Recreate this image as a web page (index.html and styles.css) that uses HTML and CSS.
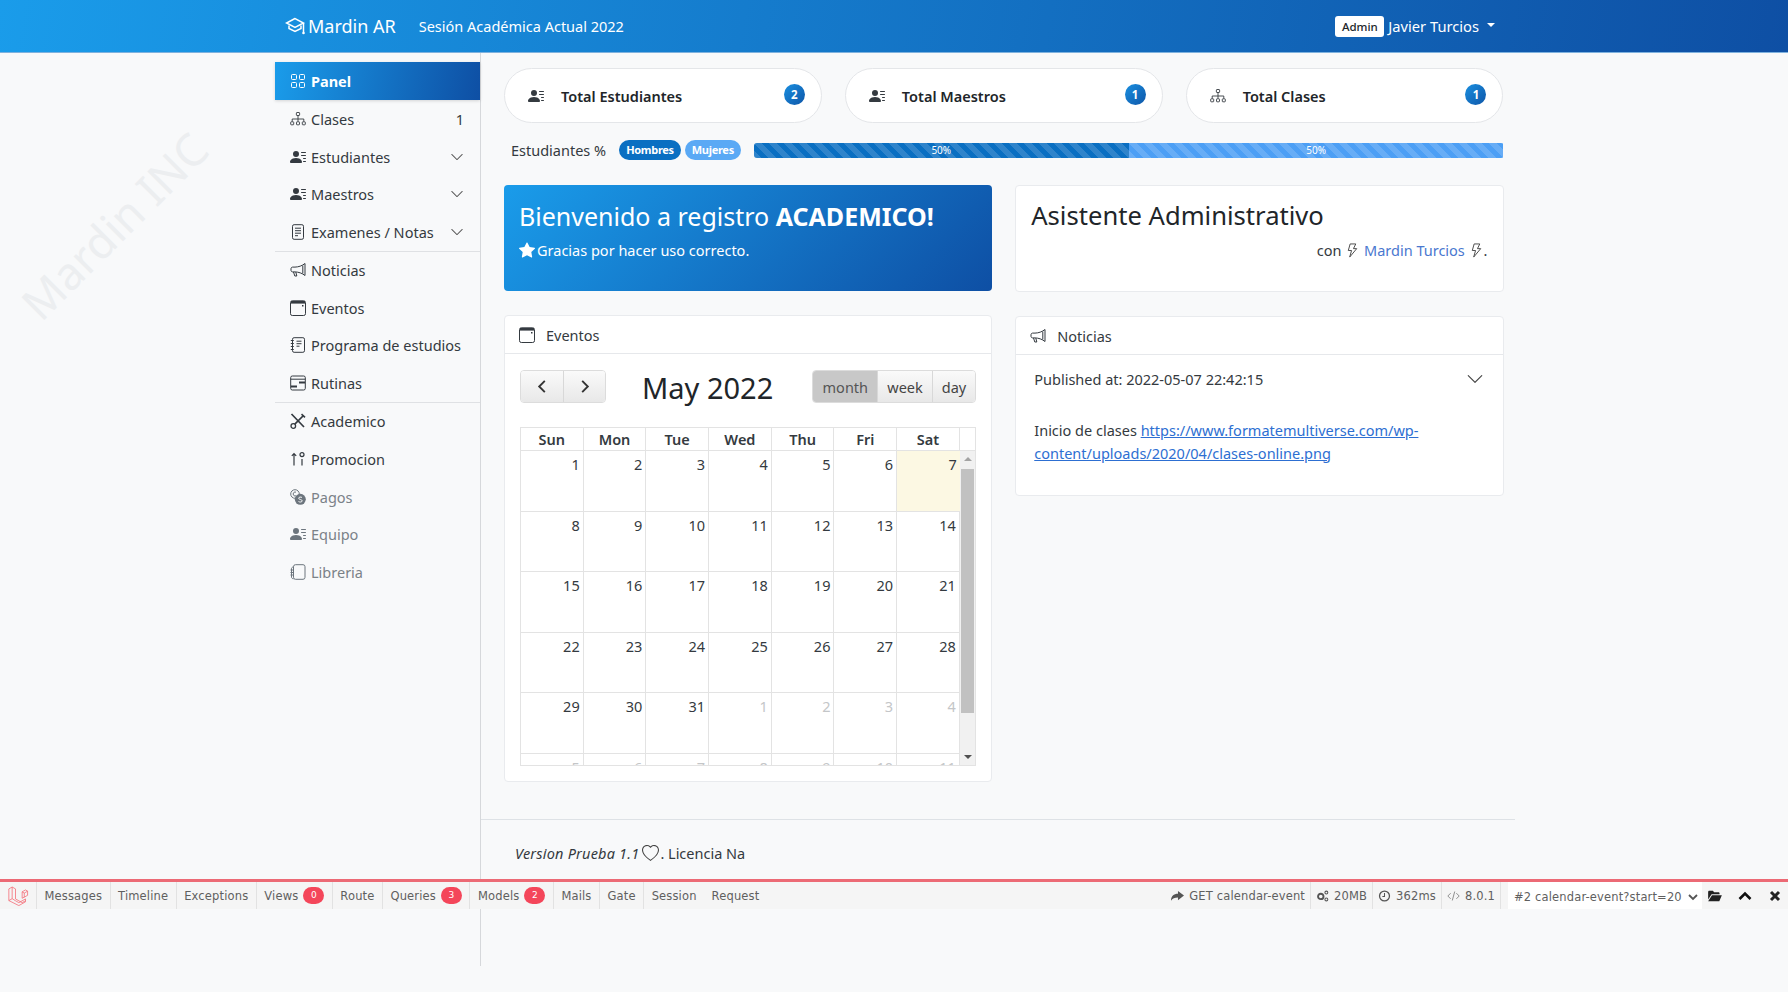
FILE: index.html
```html
<!DOCTYPE html>
<html lang="es">
<head>
    <meta charset="UTF-8">
    <meta name="viewport" content="width=device-width, initial-scale=1.0">
    <title>Panel</title>
    <link rel="stylesheet" href="styles.css">
</head>
<body>
    <!-- icon sprite -->
    <svg class="sprite" xmlns="http://www.w3.org/2000/svg">
        <symbol id="i-person" viewBox="0 0 16 16"><path fill="currentColor" d="M6 8a3 3 0 1 0 0-6 3 3 0 0 0 0 6zm-5 6s-1 0-1-1 1-4 6-4 6 3 6 4-1 1-1 1H1zM11 3.5a.5.5 0 0 1 .5-.5h4a.5.5 0 0 1 0 1h-4a.5.5 0 0 1-.5-.5zm.5 2.5a.5.5 0 0 0 0 1h4a.5.5 0 0 0 0-1h-4zm2 3a.5.5 0 0 0 0 1h2a.5.5 0 0 0 0-1h-2zm0 3a.5.5 0 0 0 0 1h2a.5.5 0 0 0 0-1h-2z"/></symbol>
        <symbol id="i-chevron" viewBox="0 0 16 16"><path fill="currentColor" d="M1.646 4.646a.5.5 0 0 1 .708 0L8 10.293l5.646-5.647a.5.5 0 0 1 .708.708l-6 6a.5.5 0 0 1-.708 0l-6-6a.5.5 0 0 1 0-.708z"/></symbol>
        <symbol id="i-grid" viewBox="0 0 16 16"><g fill="none" stroke="currentColor"><rect x="1.5" y="1.5" width="5" height="5" rx="1"/><rect x="9.5" y="1.5" width="5" height="5" rx="1"/><rect x="1.5" y="9.5" width="5" height="5" rx="1"/><rect x="9.5" y="9.5" width="5" height="5" rx="1"/></g></symbol>
        <symbol id="i-diagram" viewBox="0 0 16 16"><g fill="none" stroke="currentColor" stroke-width=".9"><rect x="6.4" y="1.5" width="3.2" height="3" rx=".6"/><path d="M8 4.5V8M2.2 10.5V8h11.6v2.5M8 8v2.5"/><rect x=".7" y="10.8" width="3" height="3" rx=".6"/><rect x="6.5" y="10.8" width="3" height="3" rx=".6"/><rect x="12.3" y="10.8" width="3" height="3" rx=".6"/></g></symbol>
        <symbol id="i-journal" viewBox="0 0 16 16"><g fill="none" stroke="currentColor"><rect x="2.5" y=".7" width="11" height="14.6" rx="1.6"/><path d="M5 4.2h6M5 6.7h6M5 9.2h6M5 11.7h3"/></g></symbol>
        <symbol id="i-megaphone" viewBox="0 0 16 16"><g fill="none" stroke="currentColor"><path d="M15 1.5v12c-3-2.4-6.5-3.5-10-3.6H2.6C1.7 9.9 1 9.2 1 8.2V6.8c0-1 .7-1.7 1.6-1.7H5c3.5-.1 7-1.2 10-3.600z"/><path d="M12.8 3.5v8M3.5 10l1.3 4h2L5.800 10.100"/></g></symbol>
        <symbol id="i-calendar" viewBox="0 0 16 16"><rect x=".5" y=".8" width="15" height="14.7" rx="1.8" fill="none" stroke="currentColor"/><path fill="currentColor" d="M1 1h14v2.6H1z"/><rect x="12" y="5" width="1.5" height="1.5" fill="currentColor"/></symbol>
        <symbol id="i-syllabus" viewBox="0 0 16 16"><g fill="none" stroke="currentColor"><rect x="2.5" y=".7" width="12" height="14.6" rx="1.6"/><path d="M6.5 4.2h5M6.5 6.7h5M6.5 9.2h3M.8 3.5h3M.8 6.5h3M.8 9.5h3M.8 12.5h3"/></g></symbol>
        <symbol id="i-routine" viewBox="0 0 16 16"><g fill="none" stroke="currentColor"><rect x=".7" y="1" width="14.6" height="14" rx="1.6"/><path d="M.7 4.2h14.6"/></g><path fill="currentColor" d="M9 6.5h6v2H9zM1 10.5h6v2H1z"/></symbol>
        <symbol id="i-tools" viewBox="0 0 16 16"><g fill="none" stroke="currentColor"><path stroke-width="1.7" d="M1.5 1 14 14M13.5 2.5 4.8 11.2"/><circle cx="3.3" cy="13" r="2.3" stroke-width="1.3"/><path stroke-width="1.6" d="M11.5 1.2 15 4.4"/></g></symbol>
        <symbol id="i-sort" viewBox="0 0 16 16"><g fill="none" stroke="currentColor" stroke-width="1.2"><path d="M4 14.5V2.5M1.8 4.8 4 2.500l2.200 2.300M12 8v6.500"/><circle cx="12" cy="3.600" r="2"/></g></symbol>
        <symbol id="i-coins" viewBox="0 0 16 16"><circle cx="5" cy="5" r="4.3" fill="none" stroke="currentColor"/><path d="M6 3.2C4.5 2.5 3.2 3.5 3.2 5S4.5 7.5 6 6.8" fill="none" stroke="currentColor"/><circle cx="10.3" cy="10.3" r="5.5" fill="currentColor"/><path d="M12 8.5c-1-.7-3.3-.7-3.3.8s3.5 1 3.5 2.5-2.5 1.5-3.7.7" fill="none" stroke="#f8f9fa" stroke-width="1"/></symbol>
        <symbol id="i-book" viewBox="0 0 16 16"><g fill="none" stroke="currentColor"><rect x="3.5" y=".7" width="11.5" height="14.6" rx="2"/><path d="M3.5 2.8C1.8 3.2 1.5 4 1.5 5v8c0 1 .7 1.7 2 1.8M.5 6H3M.5 8.5H3M.5 11H3"/></g></symbol>
        <symbol id="i-bolt" viewBox="0 0 16 16"><path fill="none" stroke="currentColor" d="M5.5 1h6L9 6h3.5L5 15l2-7H3.5z"/></symbol>
        <symbol id="i-star" viewBox="0 0 16 16"><path fill="currentColor" d="M3.612 15.443c-.386.198-.824-.149-.746-.592l.83-4.73L.173 6.765c-.329-.314-.158-.888.283-.95l4.898-.696L7.538.792c.197-.39.73-.39.927 0l2.184 4.327 4.898.696c.441.062.612.636.282.95l-3.522 3.356.83 4.73c.078.443-.36.79-.746.592L8 13.187l-4.389 2.256z"/></symbol>
        <symbol id="i-heart" viewBox="0 0 16 16"><path fill="currentColor" d="m8 2.748-.717-.737C5.6.281 2.514.878 1.4 3.053c-.523 1.023-.641 2.5.314 4.385.92 1.815 2.834 3.989 6.286 6.357 3.452-2.368 5.365-4.542 6.286-6.357.955-1.886.838-3.362.314-4.385C13.486.878 10.4.28 8.717 2.01L8 2.748zM8 15C-7.333 4.868 3.279-3.04 7.824 1.143c.06.055.119.112.176.171a3.12 3.12 0 0 1 .176-.17C12.72-3.042 23.333 4.867 8 15z"/></symbol>
    </svg>

    <div class="watermark">Mardin INC</div>

    <header class="navbar">
        <a class="brand">
            <svg class="brand-icon" viewBox="0 0 20 18"><g fill="none" stroke="currentColor" stroke-width="1.5"><path d="M10 1.5 1.500 6 10 10.500 18.500 6z"/><path d="M4 8.500v3L10 14.500l6-3v-3"/><path d="M18.500 6v9"/></g><circle cx="18.500" cy="16" r="1.300" fill="currentColor"/></svg>
            Mardin AR
        </a>
        <span class="session">Sesión Académica Actual 2022</span>
        <div class="user">
            <span class="role">Admin</span>
            <span>Javier Turcios</span>
            <span class="caret"></span>
        </div>
    </header>

    <div class="layout">
        <nav class="sidebar">
            <a class="side-item active"><svg class="ico"><use href="#i-grid"/></svg>Panel</a>
            <a class="side-item"><svg class="ico"><use href="#i-diagram"/></svg>Clases<span class="side-end">1</span></a>
            <a class="side-item"><svg class="ico"><use href="#i-person"/></svg>Estudiantes<svg class="side-end chev"><use href="#i-chevron"/></svg></a>
            <a class="side-item"><svg class="ico"><use href="#i-person"/></svg>Maestros<svg class="side-end chev"><use href="#i-chevron"/></svg></a>
            <a class="side-item"><svg class="ico"><use href="#i-journal"/></svg>Examenes / Notas<svg class="side-end chev"><use href="#i-chevron"/></svg></a>
            <div class="side-rule"></div>
            <a class="side-item"><svg class="ico"><use href="#i-megaphone"/></svg>Noticias</a>
            <a class="side-item"><svg class="ico"><use href="#i-calendar"/></svg>Eventos</a>
            <a class="side-item"><svg class="ico"><use href="#i-syllabus"/></svg>Programa de estudios</a>
            <a class="side-item"><svg class="ico"><use href="#i-routine"/></svg>Rutinas</a>
            <div class="side-rule"></div>
            <a class="side-item"><svg class="ico"><use href="#i-tools"/></svg>Academico</a>
            <a class="side-item"><svg class="ico"><use href="#i-sort"/></svg>Promocion</a>
            <a class="side-item muted"><svg class="ico"><use href="#i-coins"/></svg>Pagos</a>
            <a class="side-item muted"><svg class="ico"><use href="#i-person"/></svg>Equipo</a>
            <a class="side-item muted"><svg class="ico"><use href="#i-book"/></svg>Libreria</a>
        </nav>

        <main class="main">
            <div class="content">
                <section class="totals">
                    <div class="total-card">
                        <svg class="ico"><use href="#i-person"/></svg>
                        <span class="total-label">Total Estudiantes</span>
                        <span class="count">2</span>
                    </div>
                    <div class="total-card">
                        <svg class="ico"><use href="#i-person"/></svg>
                        <span class="total-label">Total Maestros</span>
                        <span class="count">1</span>
                    </div>
                    <div class="total-card">
                        <svg class="ico"><use href="#i-diagram"/></svg>
                        <span class="total-label">Total Clases</span>
                        <span class="count">1</span>
                    </div>
                </section>

                <section class="ratio">
                    <span class="ratio-label">Estudiantes %</span>
                    <span class="pill pill-male">Hombres</span>
                    <span class="pill pill-female">Mujeres</span>
                    <div class="progress">
                        <div class="bar bar-male" style="width: 50%">50%</div>
                        <div class="bar bar-female" style="width: 50%">50%</div>
                    </div>
                </section>

                <section class="columns">
                    <div class="column">
                        <div class="welcome">
                            <h1>Bienvenido a registro <b>ACADEMICO!</b></h1>
                            <p><svg class="star"><use href="#i-star"/></svg>Gracias por hacer uso correcto.</p>
                        </div>

                        <div class="card">
                            <div class="card-head"><svg class="ico"><use href="#i-calendar"/></svg>Eventos</div>
                            <div class="calendar">
                                <div class="cal-toolbar">
                                    <div class="btn-group">
                                        <span class="cal-btn arrow">
                                            <svg viewBox="0 0 10 16"><path d="M8 2 2 8l6 6" fill="none" stroke="currentColor" stroke-width="2"/></svg>
                                        </span>
                                        <span class="cal-btn arrow">
                                            <svg viewBox="0 0 10 16"><path d="m2 2 6 6-6 6" fill="none" stroke="currentColor" stroke-width="2"/></svg>
                                        </span>
                                    </div>
                                    <h2>May 2022</h2>
                                    <div class="btn-group">
                                        <span class="cal-btn on">month</span>
                                        <span class="cal-btn">week</span>
                                        <span class="cal-btn">day</span>
                                    </div>
                                </div>

                                <div class="cal-grid">
                                    <div class="cal-head">
                                        <span>Sun</span><span>Mon</span><span>Tue</span><span>Wed</span><span>Thu</span><span>Fri</span><span>Sat</span>
                                    </div>
                                    <div class="cal-scroll">
                                        <div class="cal-rows">
                                            <div class="cal-row"><span>1</span><span>2</span><span>3</span><span>4</span><span>5</span><span>6</span><span class="today">7</span></div>
                                            <div class="cal-row"><span>8</span><span>9</span><span>10</span><span>11</span><span>12</span><span>13</span><span>14</span></div>
                                            <div class="cal-row"><span>15</span><span>16</span><span>17</span><span>18</span><span>19</span><span>20</span><span>21</span></div>
                                            <div class="cal-row"><span>22</span><span>23</span><span>24</span><span>25</span><span>26</span><span>27</span><span>28</span></div>
                                            <div class="cal-row"><span>29</span><span>30</span><span>31</span><span class="other">1</span><span class="other">2</span><span class="other">3</span><span class="other">4</span></div>
                                            <div class="cal-row"><span class="other">5</span><span class="other">6</span><span class="other">7</span><span class="other">8</span><span class="other">9</span><span class="other">10</span><span class="other">11</span></div>
                                        </div>
                                        <div class="scrollbar">
                                            <i class="tri tri-up"></i>
                                            <div class="thumb"></div>
                                            <i class="tri tri-down"></i>
                                        </div>
                                    </div>
                                </div>
                            </div>
                        </div>
                    </div>

                    <div class="column">
                        <div class="assistant">
                            <h2>Asistente Administrativo</h2>
                            <p>con <svg class="bolt"><use href="#i-bolt"/></svg> <a>Mardin Turcios</a> <svg class="bolt"><use href="#i-bolt"/></svg>.</p>
                        </div>

                        <div class="card">
                            <div class="card-head"><svg class="ico"><use href="#i-megaphone"/></svg>Noticias</div>
                            <div class="news">
                                <div class="news-top">
                                    <span>Published at: 2022-05-07 22:42:15</span>
                                    <svg class="news-chev"><use href="#i-chevron"/></svg>
                                </div>
                                <p>Inicio de clases <a class="link">https://www.formatemultiverse.com/wp-content/uploads/2020/04/clases-online.png</a></p>
                            </div>
                        </div>
                    </div>
                </section>
            </div>

            <footer class="footer"><em>Version Prueba 1.1</em><svg class="heart"><use href="#i-heart"/></svg>. Licencia Na</footer>
        </main>
    </div>

    <!-- debug bar sits over the page bottom -->
    <div class="debugbar">
        <div class="db-header">
            <a class="db-logo">
                <svg viewBox="0 0 24 24" fill="none" stroke="#f4646f" stroke-width=".9"><path d="M1 3.5 5 1.200l4 2.300v12l8 4.500 4-2.300M1 3.500v14l12 6 8-4.500v-3.500l-8 4.500-4-2.300M5 1.200v14l4 2.500M5 15.200l-4 2.300M17 7l4-2.300 2.500 1.500v5l-6.500 3.500zM17 7l2.500 1.500v5M19.500 8.500l4-2.300"/></svg>
            </a>
            <a class="db-tab">Messages</a>
            <a class="db-tab">Timeline</a>
            <a class="db-tab">Exceptions</a>
            <a class="db-tab">Views <b class="db-badge">0</b></a>
            <a class="db-tab">Route</a>
            <a class="db-tab">Queries <b class="db-badge">3</b></a>
            <a class="db-tab">Models <b class="db-badge">2</b></a>
            <a class="db-tab">Mails</a>
            <a class="db-tab">Gate</a>
            <a class="db-tab plain">Session</a>
            <a class="db-tab plain">Request</a>

            <div class="db-right">
                <span class="db-stat">
                    <svg viewBox="0 0 14 12"><path fill="#555" d="M0 11c0-5 3-7.500 7.500-7.500V.5L14 5.500l-6.500 5V7.500C4 7.500 1.500 8.500 0 11z"/></svg>
                    GET calendar-event
                </span>
                <span class="db-stat">
                    <svg viewBox="0 0 14 14"><circle cx="5" cy="7.500" r="3.200" fill="none" stroke="#555" stroke-width="2.200"/><circle cx="11.500" cy="3" r="1.700" fill="none" stroke="#555" stroke-width="1.200"/><circle cx="11.500" cy="11" r="1.700" fill="none" stroke="#555" stroke-width="1.200"/></svg>
                    20MB
                </span>
                <span class="db-stat">
                    <svg viewBox="0 0 14 14"><circle cx="7" cy="7" r="5.800" fill="none" stroke="#555" stroke-width="1.500"/><path d="M7 3.500V7.500H4.500" fill="none" stroke="#555" stroke-width="1.200"/></svg>
                    362ms
                </span>
                <span class="db-stat">
                    <svg viewBox="0 0 16 14"><path d="M4.500 3.500 1 7l3.500 3.500M11.500 3.500 15 7l-3.500 3.500M9.500 1.500 6.500 12.500" fill="none" stroke="#777" stroke-width="1"/></svg>
                    8.0.1
                </span>
                <div class="db-select">#2 calendar-event?start=20<svg viewBox="0 0 10 8"><path d="m1 2 4 4 4-4" fill="none" stroke="#555" stroke-width="1.800"/></svg></div>
                <a class="db-action">
                    <svg viewBox="0 0 16 14"><path fill="#222" d="M0 2.500C0 1.500.6 1 1.500 1h4l1.500 1.500h5c.8 0 1.300.5 1.300 1.300V5H4L0 11zM4.500 6H16l-3 7H0z"/></svg>
                </a>
                <a class="db-action">
                    <svg viewBox="0 0 14 10"><path d="m1.500 8 5.500-5.500L12.500 8" fill="none" stroke="#111" stroke-width="2.600"/></svg>
                </a>
                <a class="db-action">
                    <svg viewBox="0 0 12 12"><path d="m2 2 8 8M10 2l-8 8" fill="none" stroke="#222" stroke-width="3"/></svg>
                </a>
            </div>
        </div>
    </div>
</body>
</html>
```

FILE: styles.css
```css
* {
    box-sizing: border-box;
}

body {
    font-family: "Noto Sans", "Open Sans", sans-serif;
    font-size: 14.5px;
    color: #343a40;
    margin: 0;
    background-color: #f8f9fa;
    height: 992px;
    overflow: hidden;
}

a {
    color: inherit;
    text-decoration: none;
}

.sprite {
    display: none;
}

.ico {
    width: 16px;
    height: 16px;
    flex: none;
    color: #343a40;
}

.watermark {
    position: absolute;
    left: -11px;
    top: 195px;
    width: 250px;
    text-align: center;
    font-size: 45px;
    color: #eceef0;
    transform: rotate(-45deg);
}

/* top bar */
.navbar {
    display: flex;
    align-items: center;
    height: 53px;
    padding: 0 293px 0 285px;
    color: #fff;
    background: linear-gradient(100deg, #1a9cea 0%, #0e4fa4 100%);
    border-bottom: 1px solid #7fb2de;
    position: relative;
}

.brand {
    display: flex;
    align-items: center;
    gap: 3px;
    font-size: 18px;
}

.brand-icon {
    width: 20px;
    height: 18px;
}

.session {
    margin-left: 23px;
    font-size: 14.5px;
}

.user {
    margin-left: auto;
    display: flex;
    align-items: center;
    font-size: 14.7px;
}

.role {
    background-color: #fff;
    color: #212529;
    font-size: 11.5px;
    font-weight: 500;
    padding: 3px 6.5px;
    border-radius: 3px;
    margin-right: 4px;
}

.caret {
    margin-left: 8px;
    border-top: 4.5px solid #fff;
    border-left: 4.5px solid transparent;
    border-right: 4.5px solid transparent;
    margin-bottom: 3px;
}

/* page columns */
.layout {
    display: flex;
    padding-left: 275px;
    height: 913px;
    position: relative;
}

.sidebar {
    width: 206px;
    flex: none;
    padding-top: 9px;
    border-right: 1px solid #d6d8db;
}

.side-item {
    display: flex;
    align-items: center;
    gap: 5px;
    height: 37.7px;
    padding: 0 16px 0 15px;
}

.side-item.active {
    height: 38px;
    color: #fff;
    font-weight: 700;
    background: linear-gradient(100deg, #1a9cea 0%, #0e4fa4 100%);
    box-shadow: 0 1px 3px rgba(0, 0, 0, 0.15);
}

.side-item.active .ico {
    color: #fff;
}

.side-item.muted {
    color: #7b8288;
}

.side-item.muted .ico {
    color: #6c757d;
}

.side-end {
    margin-left: auto;
}

.chev {
    width: 14px;
    height: 14px;
    color: #555;
}

.side-rule {
    border-top: 1px solid #dfe1e4;
    margin-bottom: -0.5px;
}

.main {
    width: 1034px;
    flex: none;
    display: flex;
    flex-direction: column;
}

.content {
    padding: 15px 11.5px 0 23px;
    height: 766px;
}

/* summary cards */
.totals {
    display: flex;
    gap: 23px;
}

.total-card {
    flex: 1;
    display: flex;
    align-items: center;
    height: 55px;
    padding: 0 16px 0 23px;
    background-color: #fff;
    border: 1px solid #e4e6e9;
    border-radius: 28px;
}

.total-label {
    margin-left: 17px;
    font-weight: 600;
    color: #212529;
}

.count {
    margin-left: auto;
    margin-bottom: 3px;
    width: 21px;
    height: 21px;
    border-radius: 50%;
    background: linear-gradient(135deg, #1a8fe0, #0e56a8);
    color: #fff;
    font-size: 11.5px;
    font-weight: 700;
    text-align: center;
    line-height: 21px;
}

.ratio {
    display: flex;
    align-items: center;
    height: 20px;
    margin-top: 17px;
    padding-left: 7px;
}

.ratio-label {
    margin-right: 13px;
}

.pill {
    height: 20px;
    line-height: 20px;
    padding: 0 7px;
    border-radius: 10px;
    color: #fff;
    font-size: 11px;
    font-weight: 700;
    letter-spacing: -0.3px;
    margin-right: 4px;
}

.pill-male {
    background-color: #0a6fc2;
}

.pill-female {
    background-color: #5aa9f5;
}

.progress {
    flex: 1;
    display: flex;
    height: 15px;
    margin-left: 9px;
    border-radius: 3px;
    overflow: hidden;
}

.bar {
    color: #fff;
    font-size: 10px;
    line-height: 15px;
    text-align: center;
    background-image: linear-gradient(45deg, rgba(255, 255, 255, 0.15) 25%, transparent 25%, transparent 50%, rgba(255, 255, 255, 0.15) 50%, rgba(255, 255, 255, 0.15) 75%, transparent 75%, transparent);
    background-size: 15px 15px;
}

.bar-male {
    background-color: #0a6fc2;
}

.bar-female {
    background-color: #4c9ff5;
}

.columns {
    display: flex;
    gap: 23px;
    margin-top: 25px;
}

.column {
    flex: 1;
    min-width: 0;
}

.welcome {
    height: 106px;
    padding: 16px 15px;
    color: #fff;
    border-radius: 4px;
    background: linear-gradient(135deg, #1a9cea 0%, #0e4fa4 100%);
}

.welcome h1 {
    margin: 0;
    font-size: 25px;
    font-weight: 400;
    line-height: 30px;
    white-space: nowrap;
}

.welcome b {
    font-weight: 700;
}

.welcome p {
    display: flex;
    align-items: center;
    margin: 9px 0 0;
    font-size: 14.5px;
}

.star {
    width: 16px;
    height: 16px;
    margin-right: 2px;
}

.assistant {
    height: 107px;
    padding: 14px 15px;
    background-color: #fff;
    border: 1px solid #e9ebee;
    border-radius: 4px;
}

.assistant h2 {
    margin: 0;
    font-size: 25.6px;
    font-weight: 400;
    line-height: 32px;
    color: #212529;
}

.assistant p {
    margin: 8px 0 0;
    text-align: right;
    color: #343a40;
}

.assistant a {
    color: #4a78cf;
}

.bolt {
    width: 15px;
    height: 17px;
    vertical-align: -3px;
    color: #444;
}

.card {
    margin-top: 24px;
    background-color: #fff;
    border: 1px solid #e9ebee;
    border-radius: 4px;
}

.card-head {
    display: flex;
    align-items: center;
    gap: 11px;
    height: 38px;
    padding: 0 14px;
    border-bottom: 1px solid #e6e8eb;
}

/* calendar */
.calendar {
    padding: 16px 15px 15px;
}

.cal-toolbar {
    display: flex;
    align-items: center;
    justify-content: space-between;
    height: 33px;
    margin-bottom: 24px;
}

.cal-toolbar h2 {
    margin: 2px 0 0 -3px;
    font-size: 29px;
    font-weight: 400;
    color: #212529;
}

.btn-group {
    display: flex;
    border: 1px solid #dcdcdc;
    border-radius: 4px;
    overflow: hidden;
}

.cal-btn {
    display: flex;
    align-items: center;
    justify-content: center;
    height: 31px;
    padding: 0 9px;
    color: #444;
    background: linear-gradient(#fafafa, #e8e8e8);
    border-left: 1px solid #d8d8d8;
}

.cal-btn:first-child {
    border-left: none;
}

.cal-btn.on {
    width: 64px;
    background: #c8c8c8;
    color: #555;
}

.arrow {
    width: 42px;
}

.arrow svg {
    width: 10px;
    height: 15px;
    color: #333;
}

.cal-grid {
    border: 1px solid #e3e3e3;
    width: 456px;
}

.cal-head {
    display: grid;
    grid-template-columns: repeat(7, 62.7px) 16px;
    height: 23px;
    border-bottom: 1px solid #e3e3e3;
    font-weight: 600;
    text-align: center;
    color: #343a40;
    line-height: 22px;
}

.cal-head span {
    border-right: 1px solid #e3e3e3;
}

.cal-scroll {
    display: flex;
    height: 314px;
    overflow: hidden;
}

.cal-rows {
    width: 439px;
    flex: none;
}

.cal-row {
    display: grid;
    grid-template-columns: repeat(7, 62.7px);
    height: 60.6px;
    border-bottom: 1px solid #e3e3e3;
}

.cal-row span {
    padding: 3px 3px 0 0;
    text-align: right;
    border-right: 1px solid #e3e3e3;
    color: #343a40;
}

.cal-row span.today {
    background-color: #fcf8e3;
    border-right: none;
}

.cal-row span.other {
    color: #c4c6c8;
}

.scrollbar {
    flex: 1;
    display: flex;
    flex-direction: column;
    align-items: center;
    background-color: #f1f1f1;
}

.thumb {
    width: 13px;
    height: 244px;
    margin-top: 8px;
    background-color: #c1c1c1;
}

.tri {
    width: 0;
    height: 0;
    border-left: 4px solid transparent;
    border-right: 4px solid transparent;
}

.tri-up {
    margin-top: 6px;
    border-bottom: 4px solid #a3a3a3;
}

.tri-down {
    margin-top: auto;
    margin-bottom: 6px;
    border-top: 4px solid #505050;
}

/* news */
.news {
    padding: 14px 19px 0 18px;
    height: 140px;
}

.news-top {
    display: flex;
    justify-content: space-between;
    align-items: center;
}

.news-chev {
    width: 18px;
    height: 18px;
    color: #444;
}

.news p {
    margin: 30px 0 0;
    line-height: 22.5px;
}

.link {
    color: #2d6fd2;
    text-decoration: underline;
}

/* footer */
.footer {
    border-top: 1px solid #dee2e6;
    padding: 23px 0 0 34px;
    display: flex;
    align-items: center;
}

.footer em {
    letter-spacing: 0.2px;
}

.heart {
    width: 17px;
    height: 17px;
    margin: 0 1px 0 3px;
    color: #444;
}

/* debug bar */
.debugbar {
    position: fixed;
    left: 0;
    right: 0;
    bottom: 0;
    height: 113px;
    border-top: 3px solid #ec6a75;
    font-family: "DejaVu Sans", sans-serif;
    font-size: 11.5px;
    letter-spacing: 0.15px;
    color: #5f5f5f;
}

.db-header {
    display: flex;
    align-items: center;
    height: 27px;
    background-color: #f5f5f5;
}

.db-logo {
    display: flex;
    align-items: center;
    height: 100%;
    width: 37px;
    padding-left: 7px;
    border-right: 1px solid #e2e2e2;
}

.db-logo svg {
    width: 22px;
    height: 20px;
}

.db-tab {
    display: flex;
    align-items: center;
    height: 100%;
    padding: 0 7.5px;
    border-right: 1px solid #e2e2e2;
}

.db-tab.plain {
    border-right: none;
}

.db-badge {
    margin-left: 5px;
    width: 21px;
    height: 17px;
    border-radius: 9px;
    background-color: #f4465a;
    color: #fff;
    font-size: 9px;
    font-weight: 400;
    text-align: center;
    line-height: 17px;
}

.db-right {
    margin-left: auto;
    display: flex;
    align-items: center;
    height: 100%;
}

.db-stat {
    display: flex;
    align-items: center;
    gap: 5px;
    height: 100%;
    padding: 0 5px;
    border-right: 1px solid #e2e2e2;
}

.db-stat svg {
    width: 13px;
    height: 12px;
}

.db-select {
    display: flex;
    align-items: center;
    justify-content: space-between;
    width: 194px;
    height: 100%;
    margin-left: 7px;
    padding: 3px 4px 0 6px;
    background-color: #fff;
}

.db-select svg {
    width: 10px;
    height: 8px;
}

.db-action {
    display: flex;
    align-items: center;
    justify-content: center;
    width: 26px;
}

.db-action svg {
    width: 14px;
    height: 12px;
}

.db-action:nth-last-child(2) {
    width: 34px;
}
```
